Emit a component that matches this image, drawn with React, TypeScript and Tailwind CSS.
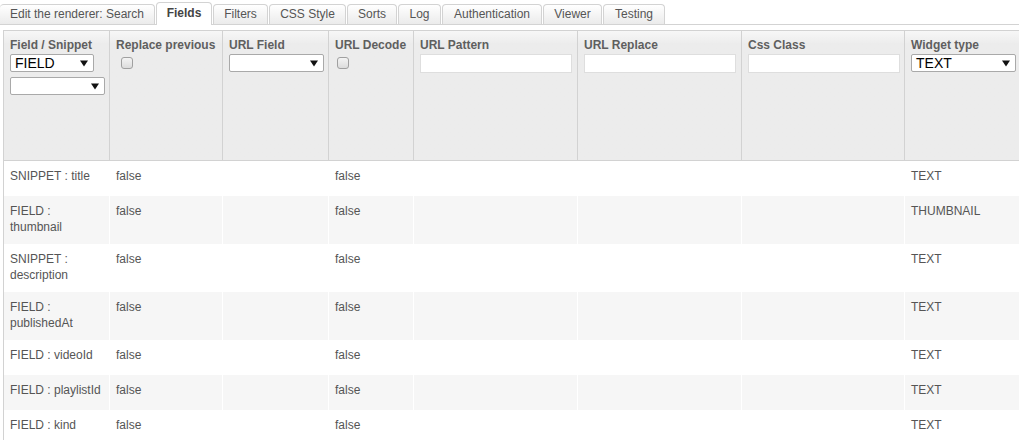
import React from "react";

const tabs = [
  { label: "Edit the renderer: Search", w: 155, label0: true },
  { label: "Fields", w: 56, active: true },
  { label: "Filters", w: 55 },
  { label: "CSS Style", w: 77 },
  { label: "Sorts", w: 50 },
  { label: "Log", w: 43 },
  { label: "Authentication", w: 100 },
  { label: "Viewer", w: 59 },
  { label: "Testing", w: 62 },
];

const cols = [
  "w-[106px]",
  "w-[113px]",
  "w-[106px]",
  "w-[85px]",
  "w-[164px]",
  "w-[164px]",
  "w-[163px]",
  "w-[130px]",
];

const rows: { f: string[]; wt: string; h: string; gray: boolean }[] = [
  { f: ["SNIPPET : title"], wt: "TEXT", h: "h-[35px]", gray: false },
  { f: ["FIELD :", "thumbnail"], wt: "THUMBNAIL", h: "h-[48px]", gray: true },
  { f: ["SNIPPET :", "description"], wt: "TEXT", h: "h-[48px]", gray: false },
  { f: ["FIELD :", "publishedAt"], wt: "TEXT", h: "h-[48px]", gray: true },
  { f: ["FIELD : videoId"], wt: "TEXT", h: "h-[35px]", gray: false },
  { f: ["FIELD : playlistId"], wt: "TEXT", h: "h-[35px]", gray: true },
  { f: ["FIELD : kind"], wt: "TEXT", h: "h-[35px]", gray: false },
];

function Arrow() {
  return (
    <svg width="8" height="7" viewBox="0 0 8 7" className="shrink-0">
      <path d="M0 0.5 L8 0.5 L4 6.5 Z" fill="#111" />
    </svg>
  );
}

function Select({ value, w }: { value?: string; w: string }) {
  return (
    <div
      className={`${w} h-[18px] bg-white border border-[#a9a9a9] rounded-[2px] flex items-center justify-between pl-[4px] pr-[5px] text-[14px] font-normal leading-none text-black`}
    >
      <span>{value ?? ""}</span>
      <Arrow />
    </div>
  );
}

function Check() {
  return (
    <div className="w-[12px] h-[12px] rounded-[3px] border border-[#a0a0a0] bg-linear-to-b from-[#f4f4f4] to-[#dcdcdc]" />
  );
}

function Input() {
  return <div className="w-[152px] h-[19px] bg-white border border-[#dedede]" />;
}

export default function App() {
  return (
    <div
      className="w-[1019px] h-[440px] overflow-hidden bg-white text-[12px]"
      style={{ fontFamily: '"Liberation Sans", Arial, sans-serif' }}
    >
      {/* tabs */}
      <div className="h-[25px] border-b border-[#d3d3d3] flex items-end gap-[1px]">
        {tabs.map((t) =>
          t.active ? (
            <div
              key={t.label}
              style={{ width: t.w }}
              className="h-[23px] -mb-[1px] bg-white border border-b-0 border-[#d3d3d3] rounded-t-[4px] flex items-center justify-center font-bold text-[#444] pb-[3px]"
            >
              {t.label}
            </div>
          ) : (
            <div
              key={t.label}
              style={{ width: t.w }}
              className={`h-[20px] bg-linear-to-b from-[#ffffff] to-[#ebebeb] border-t border-r border-[#d3d3d3] ${
                t.label0 ? "" : "border-l"
              } rounded-t-[4px] flex items-center justify-center text-[#555] pb-[2px]`}
            >
              {t.label}
            </div>
          )
        )}
      </div>

      {/* table */}
      <div className="mt-[5px] ml-[3px] w-[1100px]">
        {/* header */}
        <div className="h-[131px] flex border-t border-b border-[#d2d2d2] bg-linear-to-b from-[#f7f7f7] to-[#ececec] to-[10%] font-bold text-[#5f5f5f]">
          <div className={`${cols[0]} border-l border-[#d2d2d2] pl-[6px] pt-[7px]`}>
            <div className="leading-[15px]">Field / Snippet</div>
            <div className="mt-[1px]">
              <Select value="FIELD" w="w-[84px]" />
            </div>
            <div className="mt-[5px]">
              <Select w="w-[95px]" />
            </div>
          </div>
          <div className={`${cols[1]} border-l border-[#d2d2d2] pl-[6px] pt-[7px]`}>
            <div className="leading-[15px]">Replace previous</div>
            <div className="mt-[4px] ml-[5px]">
              <Check />
            </div>
          </div>
          <div className={`${cols[2]} border-l border-[#d2d2d2] pl-[6px] pt-[7px]`}>
            <div className="leading-[15px]">URL Field</div>
            <div className="mt-[1px]">
              <Select w="w-[95px]" />
            </div>
          </div>
          <div className={`${cols[3]} border-l border-[#d2d2d2] pl-[6px] pt-[7px]`}>
            <div className="leading-[15px]">URL Decode</div>
            <div className="mt-[4px] ml-[2px]">
              <Check />
            </div>
          </div>
          <div className={`${cols[4]} border-l border-[#d2d2d2] pl-[6px] pt-[7px]`}>
            <div className="leading-[15px]">URL Pattern</div>
            <div className="mt-[1px]">
              <Input />
            </div>
          </div>
          <div className={`${cols[5]} border-l border-[#d2d2d2] pl-[6px] pt-[7px]`}>
            <div className="leading-[15px]">URL Replace</div>
            <div className="mt-[1px]">
              <Input />
            </div>
          </div>
          <div className={`${cols[6]} border-l border-[#d2d2d2] pl-[6px] pt-[7px]`}>
            <div className="leading-[15px]">Css Class</div>
            <div className="mt-[1px]">
              <Input />
            </div>
          </div>
          <div className={`${cols[7]} border-l border-[#d2d2d2] pl-[6px] pt-[7px]`}>
            <div className="leading-[15px]">Widget type</div>
            <div className="mt-[1px]">
              <Select value="TEXT" w="w-[105px]" />
            </div>
          </div>
        </div>

        {/* body */}
        {rows.map((r, i) => (
          <div
            key={i}
            className={`${r.h} flex text-[#555] leading-[16px] ${
              r.gray ? "bg-[#f6f6f6]" : "bg-white"
            }`}
          >
            <div className={`${cols[0]} border-l border-[#d2d2d2] pl-[6px] pt-[7px]`}>
              {r.f.map((l) => (
                <div key={l}>{l}</div>
              ))}
            </div>
            <div className={`${cols[1]} border-l border-white pl-[6px] pt-[7px]`}>false</div>
            <div className={`${cols[2]} border-l border-white`} />
            <div className={`${cols[3]} border-l border-white pl-[6px] pt-[7px]`}>false</div>
            <div className={`${cols[4]} border-l border-white`} />
            <div className={`${cols[5]} border-l border-white`} />
            <div className={`${cols[6]} border-l border-white`} />
            <div className={`${cols[7]} border-l border-white pl-[6px] pt-[7px]`}>{r.wt}</div>
          </div>
        ))}
      </div>
    </div>
  );
}
